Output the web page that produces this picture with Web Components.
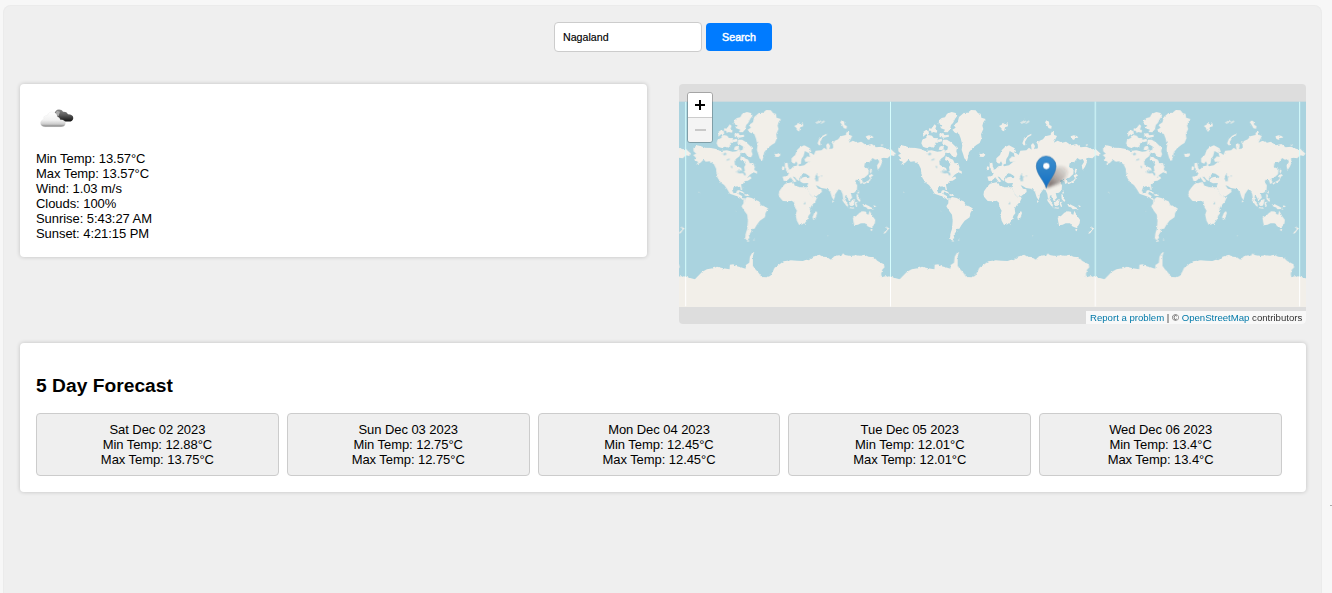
<!DOCTYPE html>
<html lang="en">
<head>
<meta charset="utf-8">
<title>Weather</title>
<style>
html,body{margin:0;height:100%;overflow:hidden}
body{background:#f7f7f7;font:13px/15px "Liberation Sans",Arial,sans-serif;letter-spacing:-.06px;color:#000}
</style>
</head>
<body>
<weather-app></weather-app>
<script>
const define=(name,html)=>{
  const t=document.createElement('template');t.innerHTML=html;
  customElements.define(name,class extends HTMLElement{
    constructor(){super();this.attachShadow({mode:'open'}).append(t.content.cloneNode(true));}
  });
};

define('search-bar',`<style>
:host{display:flex;justify-content:center;align-items:center;gap:4px;height:30px}
input{box-sizing:border-box;width:148px;height:30px;border:1px solid #ccc;border-radius:4px;padding:0 8px;background:#fff;font:10.67px "Liberation Sans",Arial,sans-serif;color:#000;outline:0;-webkit-text-stroke:.15px #000}
button{box-sizing:border-box;width:66px;height:28px;border:0;border-radius:4px;padding:0;background:#007bff;color:#fff;font:10.67px "Liberation Sans",Arial,sans-serif;-webkit-text-stroke:.45px #fff}
</style><input type="text" value="Nagaland" aria-label="City"><button>Search</button>`);

define('panel-card',`<style>
:host{display:block;box-sizing:border-box;background:#fff;border-radius:4px;padding:16px;box-shadow:0 0 4px rgba(0,0,0,.2)}
</style><slot></slot>`);

define('weather-icon',`<style>:host{display:block;width:40px;height:40px}svg{display:block}</style>
<svg width="40" height="40" viewBox="0 0 40 40">
<defs><linearGradient id="w" x1="0" y1="0" x2="0" y2="1"><stop offset="0" stop-color="#fff"/><stop offset=".55" stop-color="#f1f1f1"/><stop offset=".82" stop-color="#ccc"/><stop offset="1" stop-color="#777"/></linearGradient>
<linearGradient id="d" x1="0" y1="0" x2="0" y2="1"><stop offset="0" stop-color="#888"/><stop offset=".5" stop-color="#555"/><stop offset="1" stop-color="#111"/></linearGradient></defs>
<path d="M18.4 14.5c.2-2.900 2-5 4.600-5 1.900 0 3.200.8 4 2.300 2.300-.3 4 .5 5 2.400 3 0 5.300 1.300 5.300 3.700 0 2.400-2 3.600-4.300 3.600h-5.500c-3.400 0-4.500-1.500-5.500-4.200z" fill="url(#d)"/>
<path d="M19 14l2-3.200 3 1-1.500 4.500z" fill="#aaa"/>
<path d="M9.200 26.800c-3 0-4.700-1.500-4.700-3.700 0-2 1.500-3.300 3.300-3.500-.8-3 1.200-4.400 3.200-4 1.200-2.700 3.500-4 6-3.500 2.700.5 4.200 2.400 4.400 5 1.600.1 2.500 1 2.700 2.600 3.500-.2 5.300 1.300 5.300 3.500 0 2.300-1.700 3.600-4.300 3.600z" fill="url(#w)" stroke="#ddd" stroke-width=".25"/>
</svg>`);

define('current-weather',`<style>
:host{display:block}
weather-icon{margin:0 0 11px}
</style><panel-card><weather-icon></weather-icon>
<div>Min Temp: 13.57°C</div><div>Max Temp: 13.57°C</div><div>Wind: 1.03 m/s</div><div>Clouds: 100%</div><div>Sunrise: 5:43:27 AM</div><div>Sunset: 4:21:15 PM</div></panel-card>`);

define('zoom-control',`<style>
:host{display:block;width:24px;border:1px solid rgba(0,0,0,.25);border-radius:3px;overflow:hidden;background-clip:padding-box}
div{height:24px;background:#fff;display:flex;align-items:center;justify-content:center}
div+div{background:#f4f4f4;border-top:1px solid #ccc}
svg{display:block}
</style><div><svg width="12" height="12"><path d="M1 6h10M6 1v10" stroke="#000" stroke-width="2"/></svg></div><div><svg width="12" height="12"><path d="M1 6h11" stroke="#bbb" stroke-width="1.5"/></svg></div>`);

define('world-map',`<style>
:host{display:block;position:relative;height:240px;border-radius:4px;overflow:hidden;background:#ddd}
.map{display:block;width:100%;height:240px}
zoom-control{position:absolute;left:8px;top:8px}
.attr{position:absolute;right:0;bottom:0;box-sizing:border-box;width:220px;height:13px;padding:0 4px;background:rgba(255,255,255,.8);font-size:9.6px;letter-spacing:0;line-height:13px;color:#333;white-space:nowrap;text-align:right}
a{color:#0078a8}
</style>
<svg class="map" viewBox="-618 -33 1881 720" preserveAspectRatio="none">
<defs>
<filter id="coast" x="-5%" y="-5%" width="110%" height="110%" color-interpolation-filters="sRGB"><feTurbulence type="fractalNoise" baseFrequency=".15" numOctaves="2" seed="4" result="n"/><feDisplacementMap in="SourceGraphic" in2="n" scale="7" xChannelSelector="R" yChannelSelector="G"/><feGaussianBlur stdDeviation="1.100"/></filter>
<linearGradient id="pin" x1="0" y1="0" x2="0" y2="1"><stop offset="0" stop-color="#3c8fd0"/><stop offset=".5" stop-color="#2b80c6"/><stop offset="1" stop-color="#126fc6"/></linearGradient>
<linearGradient id="shade" x1="0" y1="1" x2="1" y2="0"><stop offset="0" stop-color="#322" stop-opacity=".75"/><stop offset=".5" stop-color="#322" stop-opacity=".32"/><stop offset="1" stop-color="#322" stop-opacity=".05"/></linearGradient>
<filter id="soft" x="-30%" y="-30%" width="160%" height="160%"><feGaussianBlur stdDeviation="4"/></filter>
<g id="tile">
<g fill="#f2efe9" filter="url(#coast)">
<path d="M222 66L236 54 248 53 258 45 272 46 279 55 287 56 289 68 302 72 295 82 292 92 295 102 288 118 290 130 284 144 274 150 262 160 252 172 249 188 246 198 238 190 234 176 230 165 232 150 227 130 222 117 210 113 202 104 212 98 206 90 218 82Z"/>
<path d="M162 76L170 69 180 67 186 56 200 51 212 54 217 62 210 72 204 84 198 90 195 103 188 112 176 111 180 104 166 99 172 91 161 88Z"/>
<path d="M142 97l7-9 5 5-3 8 6 6-2 6-10-2-5 3-2-7-7 0 1-7 7 1zM115 110l8-5 8 4 1 9-9 0-9 7zM112 134l11-5 7-9 11 2 5 7 11 1 2 10-9 6-2 12-14-3-10 4-10-4-5-10zM163 116l12-2 3 7 13-2 1 6-15 3-13-2zM158 134l12-3 2 8-12 3zM174 134l12 0 12 8 11 10 7 7-2 10 3 9-4 9-10-2-9-12-8 2-8-7 9-4 2-9-8-5-9-4zM164 155l8-3 5 7-6 7-10-2zM182 184l10 3 5 8-8 4-9-4z"/>
<path d="M40 159L50 151 60 153 75 158 92 159 108 162 120 168 140 166 157 170 169 169 177 162 183 173 178 184 168 191 163 198 164 209 174 215 183 219 187 230 194 228 192 216 196 209 190 196 194 190 204 194 209 205 219 204 224 218 220 224 230 229 231 236 220 232 209 239 200 250 210 244 214 250 203 257 194 258 188 267 183 270 186 285 182 285 180 276 170 274 160 277 156 286 160 295 168 294 170 287 179 286 175 297 184 302 187 310 194 312 188 315 178 307 166 302 149 296 141 283 132 270 122 263 112 248 108 228 108 222 101 208 88 199 78 200 70 194 60 204 48 209 54 201 42 195 47 188 39 180 48 176 40 169Z"/>
<path d="M173 286l13 3 7 6-4 1-10-6-7-1zM193 297l12 2 2 4-13-1z"/>
<path d="M190 316L201 306 215 309 228 316 236 319 242 331 256 335 264 341 256 354 254 367 239 377 229 391 223 401 215 402 212 412 206 421 208 430 202 432 208 439 201 440 195 428 197 414 201 402 203 378 201 359 192 347 184 334 190 325Z"/>
<path d="M218 434l6 0-2 3zM283 176l6 1 9-3 3 6-6 6-10-1z"/>
<path d="M306 276L315 266 338 261 344 272 360 277 380 277 388 293 397 307 412 305 405 320 394 332 389 341 391 355 385 362 382 373 373 386 357 390 350 377 346 359 350 347 343 335 342 323 335 317 322 319 308 318 295 303 297 289Z"/>
<path d="M402 354l6-6 3 6-6 18-6 3-2-9 3-7z"/>
<path d="M334 190L345 180 350 166 359 157 372 151 389 160 393 170 385 174 374 168 370 183 364 192 362 205 354 210 348 199 343 206 334 202Z"/>
<path d="M314 205l8-2 2 12 4 10-12 3 2-6-4-6zM306 214l7 2-1 8-7 2z"/>
<path d="M307 245L322 242 326 235 318 228 332 222 340 214 350 212 351 205 357 214 372 211 384 201 393 200 375 200 372 193 380 184 389 186 386 173 393 174 401 180 406 167 424 166 432 158 440 164 438 150 444 144 450 153 447 163 459 158 458 148 454 142 464 137 474 133 481 124 497 120 498 113 506 109 508 120 516 123 510 135 506 143 518 137 532 143 543 140 558 151 575 147 587 157 604 155 622 163 631 161 647 176 641 183 632 181 622 190 610 188 603 194 606 201 600 215 593 225 590 212 597 201 594 192 585 194 577 189 568 201 554 205 552 216 566 222 565 237 553 248 545 250 548 263 541 267 537 255 527 254 525 262 531 271 530 285 522 293 512 295 516 308 506 318 500 305 495 300 494 311 499 321 494 323 489 311 487 297 482 286 475 283 465 298 461 316 455 307 450 291 442 282 423 279 412 272 407 271 414 281 424 283 425 291 409 303 397 307 386 291 380 276 384 264 369 265 361 260 359 251 369 247 377 245 387 250 388 244 382 240 377 236 366 234 363 246 357 249 358 259 350 254 343 245 338 245 349 259 342 262 331 247 320 257 311 258Z"/>
<path d="M416 151L412 145 417 132 427 122 439 116 439 121 428 127 420 140 421 151ZM342 93l8-4 3-6 7 5 8-3 1 9-9 3-3 13-7-5-2-7zM480 82l5-6 7 4 1 10 7 3-1 8-8-1-5-9zM557 124l9-3 10 2 4 5-9 1-4 6-8-4zM602 149l5-1 2 3-6 1z"/><path d="M405 82l7-3 7-5 5 6 8-4 2 5-9 5-8-2-7 3z" opacity=".65"/>
<path d="M571 220l4 7-3 10-3-7zM566 241l9-4 4 5-6 3-2 10-6 6-12 5-3 3-2-4 9-5 9-4 4-6zM534 285l3 5-1 6-4-3zM529 297l5 2 0 9 7 8-3 5-8-9zM486 312l6 4 11 12 1 7-5-2-12-16zM503 336l18 2 0 3-17-2zM508 324l9-10 7-2-1 8-4 12-8 1-4-5zM525 321l9-1-6 4 3 9-3 3-4-9zM547 327l8 1 9 4 11 6 6 7-8-3-10 1-5-6-7-2zM581 331l7 3-5 3-5-2zM457 316l4 3-2 5-3-3z"/>
<path d="M518 368L529 362 538 353 548 349 558 350 559 357 565 359 568 347 573 356 577 364 585 374 584 385 579 393 572 398 562 394 555 385 542 385 533 389 522 391 520 381ZM571 402l6 0-2 7-3-2z"/>
<path d="M619 394l5 5 4 1-6 6-6 8-6 3 2-5 8-8z"/><path d="M442 420l3 1-2 5zM54 290l3 0 2 3-4 0zM166 347l4 1-3 2z" opacity=".5"/>
<path d="M-4 640V545L16 545 44 553 65 531 80 523 102 519 110 515 129 520 148 523 149 509 159 508 170 514 182 517 196 521 197 510 207 503 209 485 216 473 222 471 218 482 218 512 224 521 235 533 244 546 260 547 270 543 278 529 283 518 298 508 310 499 332 496 350 497 368 498 378 494 386 496 398 485 417 479 428 485 440 486 452 494 462 484 476 481 484 482 488 475 494 480 510 483 528 481 540 482 553 479 565 485 581 487 592 498 611 508 613 517 606 524 603 536 604 547 617 544 637 546V640Z"/>
</g>
<g fill="#aad3df" filter="url(#coast)"><path d="M404 242l7-4 3 7 0 13-7 1-1-10zM166 231l8-5 13 1 7 6 3 9-4-1-6-7-8 1zM371 187l7-5 3 2-9 8 1 5-5 0zM128 177l7-4 5 5-8 3zM139 194l9-3 1 3-9 3zM151 213l5 0 1 7-4-3zM370 322l5-1 1 6-5 1zM421 242l5-1-1 4z"/></g>
</g>
<g id="seam" stroke-width="3"><path d="M16.500 20V545" stroke="#d6fdfd"/><path d="M16.500 545V634.400" stroke="#fff"/></g>
</defs>
<rect x="-618" y="20" width="1881" height="614.400" fill="#aad3df"/>
<svg x="-618" y="20" width="1881" height="614.400" viewBox="-618 20 1881 614.400"><use href="#tile" x="-1228.800"/><use href="#tile" x="-614.400"/><use href="#tile"/><use href="#tile" x="614.400"/><use href="#tile" x="1228.800"/>
<use href="#seam" x="-614.400"/><use href="#seam"/><use href="#seam" x="614.400"/><use href="#seam" x="1227.500"/></svg>
<path d="M484 279L496 238C502 218 526 209 542 218C557 228 543 253 521 266Z" fill="url(#shade)" filter="url(#soft)"/>
<path d="M484 279C478 257 454 238 454 213A29.500 29.500 0 0 1 513 213C513 238 490 257 484 279Z" fill="url(#pin)" stroke="#2871ae" stroke-width="2"/>
<circle cx="484" cy="213" r="10" fill="#fff" stroke="#2871ae" stroke-width="1"/>
</svg>
<zoom-control></zoom-control>
<div class="attr"><a>Report a problem</a> | © <a>OpenStreetMap</a> contributors</div>`);

define('forecast-day',`<style>
:host{display:block;box-sizing:border-box;border:1px solid #ccc;border-radius:4px;background:#efefef;padding:8px;text-align:center;height:63px}
</style><slot></slot>`);

define('five-day',`<style>
:host{display:block}
panel-card{height:149px}
h2{margin:15px 0 16px;font-size:19.200px;line-height:23px;letter-spacing:.03px}
.days{display:grid;grid-template-columns:repeat(5,1fr);gap:8px;margin-right:8px}
</style><panel-card><h2>5 Day Forecast</h2><div class="days">
<forecast-day><div>Sat Dec 02 2023</div><div>Min Temp: 12.88°C</div><div>Max Temp: 13.75°C</div></forecast-day>
<forecast-day><div>Sun Dec 03 2023</div><div>Min Temp: 12.75°C</div><div>Max Temp: 12.75°C</div></forecast-day>
<forecast-day><div>Mon Dec 04 2023</div><div>Min Temp: 12.45°C</div><div>Max Temp: 12.45°C</div></forecast-day>
<forecast-day><div>Tue Dec 05 2023</div><div>Min Temp: 12.01°C</div><div>Max Temp: 12.01°C</div></forecast-day>
<forecast-day><div>Wed Dec 06 2023</div><div>Min Temp: 13.4°C</div><div>Max Temp: 13.4°C</div></forecast-day>
</div></panel-card>`);

define('weather-app',`<style>
:host{display:block;position:relative;box-sizing:border-box;height:100vh;padding:5px 10px 0 3px;overflow:hidden}
:host::after{content:"";position:absolute;right:0;top:505px;width:2px;height:1px;background:#aaa}
main{box-sizing:border-box;height:620px;padding:17px 16px 0 17px;background:#efefef;border-radius:8px;box-shadow:inset 0 0 0 1px #ebebeb}
.top{display:grid;grid-template-columns:627px 627px;justify-content:space-between;align-items:start;margin:32px 0 19px}
</style><main><search-bar></search-bar><div class="top"><current-weather></current-weather><world-map></world-map></div><five-day></five-day></main>`);
</script>
</body>
</html>
